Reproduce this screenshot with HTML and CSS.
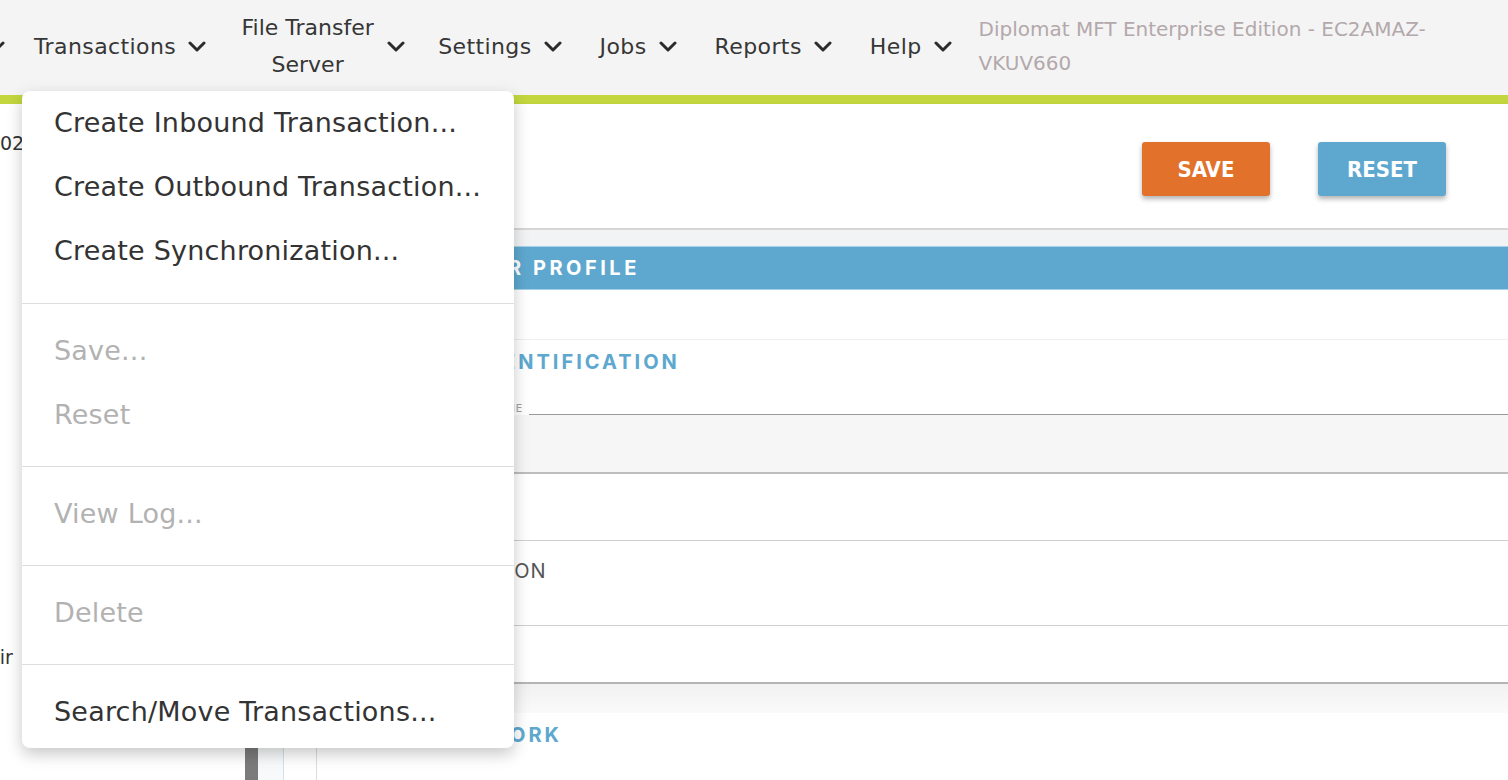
FILE: index.html
```html
<!DOCTYPE html>
<html lang="en">
<head>
<meta charset="UTF-8" />
<meta name="viewport" content="width=device-width,initial-scale=1" />
<title>Diplomat MFT</title>
<link rel="stylesheet" href="styles.css">
</head>
<body>
<header class="topbar">
  <nav class="menubar">
    <div class="nav-item nav-cut">
      <svg class="chev" viewBox="0 0 20 12"><path d="M3 3 L10 10 L17 3" /></svg>
    </div>
    <div class="nav-item">
      <span>Transactions</span>
      <svg class="chev" viewBox="0 0 20 12"><path d="M3 3 L10 10 L17 3" /></svg>
    </div>
    <div class="nav-item nav-wide">
      <span class="two-line">File Transfer Server</span>
      <svg class="chev" viewBox="0 0 20 12"><path d="M3 3 L10 10 L17 3" /></svg>
    </div>
    <div class="nav-item">
      <span>Settings</span>
      <svg class="chev" viewBox="0 0 20 12"><path d="M3 3 L10 10 L17 3" /></svg>
    </div>
    <div class="nav-item">
      <span>Jobs</span>
      <svg class="chev" viewBox="0 0 20 12"><path d="M3 3 L10 10 L17 3" /></svg>
    </div>
    <div class="nav-item">
      <span>Reports</span>
      <svg class="chev" viewBox="0 0 20 12"><path d="M3 3 L10 10 L17 3" /></svg>
    </div>
    <div class="nav-item">
      <span>Help</span>
      <svg class="chev" viewBox="0 0 20 12"><path d="M3 3 L10 10 L17 3" /></svg>
    </div>
    <div class="app-title">Diplomat MFT Enterprise Edition - EC2AMAZ-VKUV660</div>
  </nav>
</header>
<div class="accent"></div>

<div class="workspace">
  <aside class="sidebar">
    <div class="tree">
      <div class="tree-row root">0200 Transactions</div>
      <div class="tree-children">
        <div class="tree-row">Inbound</div>
        <div class="tree-row">Outbound</div>
        <div class="tree-row">Synchronization</div>
      </div>
      <div class="tree-row root shifted">Dir&nbsp;&nbsp;&nbsp;Monitors</div>
    </div>
    <div class="scroll-thumb"></div>
    <div class="tree-gap"></div>
    <div class="pane-edge"></div>
  </aside>

  <main class="editor">
    <div class="toolbar">
      <button class="btn btn-save">SAVE</button>
      <button class="btn btn-reset">RESET</button>
    </div>
    <div class="band"></div>
    <div class="profile-bar">PARTNER PROFILE</div>
    <div class="profile-gap"></div>

    <section class="section">
      <h3 class="section-title">IDENTIFICATION</h3>
      <div class="label-row">
        <span class="field-label">NAME</span>
        <span class="label-line"></span>
      </div>
      <div class="input-box"></div>
      <div class="field-row"></div>
      <div class="field-row tall"><span class="field-caption">DESCRIPTION</span></div>
      <div class="field-row last"></div>
    </section>
    <div class="band light"></div>
    <section class="section">
      <h3 class="section-title shift">NETWORK</h3>
    </section>
  </main>
</div>

<div class="dropdown">
  <div class="menu-group first">
    <div class="menu-item">Create Inbound Transaction...</div>
    <div class="menu-item">Create Outbound Transaction...</div>
    <div class="menu-item">Create Synchronization...</div>
  </div>
  <div class="menu-group">
    <div class="menu-item disabled">Save...</div>
    <div class="menu-item disabled">Reset</div>
  </div>
  <div class="menu-group">
    <div class="menu-item disabled">View Log...</div>
  </div>
  <div class="menu-group">
    <div class="menu-item disabled">Delete</div>
  </div>
  <div class="menu-group last">
    <div class="menu-item">Search/Move Transactions...</div>
  </div>
</div>
</body>
</html>
```

FILE: styles.css
```css
* {
  box-sizing: border-box;
}
body {
  margin: 0;
  font-family: 'DejaVu Sans', 'Inter', sans-serif;
  color: #333;
  background: #fff;
  height: 780px;
  overflow: hidden;
}
.topbar {
  height: 95px;
  background: #f4f4f4;
}
.menubar {
  display: flex;
  align-items: center;
  height: 100%;
  gap: 37px;
  margin-left: -14px;
  padding-bottom: 3px;
  font-size: 22px;
  letter-spacing: 0.4px;
}
.nav-item {
  display: flex;
  align-items: center;
  gap: 11px;
  color: #363636;
}
.nav-cut {
  margin-right: -9px;
}
.nav-wide {
  margin-left: -4px;
  margin-right: -5px;
}
.nav-item .two-line {
  width: 135px;
  text-align: center;
  line-height: 37px;
  letter-spacing: 0;
}
.chev {
  width: 20px;
  height: 12px;
}
.chev path {
  fill: none;
  stroke: #2b2b2b;
  stroke-width: 3;
  stroke-linecap: round;
  stroke-linejoin: round;
}
.app-title {
  width: 480px;
  margin-left: -11px;
  color: #b3a8ab;
  font-size: 20px;
  letter-spacing: 0;
  line-height: 34px;
}
.accent {
  height: 9px;
  background: #c3d63f;
}
.workspace {
  display: flex;
  height: 676px;
}
.sidebar {
  display: flex;
  width: 317px;
  border-right: 1px solid #dcdcdc;
}
.tree {
  width: 245px;
  overflow: hidden;
  padding-top: 27px;
  font-size: 19px;
}
.tree-row {
  line-height: 24px;
  white-space: nowrap;
  color: #333;
}
.tree-row.shifted {
  margin-left: -15px;
}
.tree-children {
  padding-left: 40px;
  height: 490px;
}
.tree-children .tree-row {
  line-height: 40px;
}
.scroll-thumb {
  width: 13px;
  background: #7b7b7b;
}
.tree-gap {
  width: 25px;
  background: #f7f9fa;
}
.pane-edge {
  flex: 1;
  border-left: 1px solid #cfe1ec;
}
.editor {
  flex: 1;
  display: flex;
  flex-direction: column;
}
.toolbar {
  height: 126px;
  display: flex;
  justify-content: flex-end;
  align-items: flex-start;
  gap: 48px;
  padding: 38px 62px 0 0;
  border-bottom: 2px solid #d6d6d6;
  box-shadow: 0 2px 4px rgba(0,0,0,0.12);
}
.btn {
  width: 128px;
  height: 54px;
  border: none;
  border-radius: 3px;
  color: #fff;
  font-family: 'Liberation Sans Narrow', 'DejaVu Sans Condensed', sans-serif;
  font-stretch: condensed;
  font-weight: 700;
  font-size: 22px;
  box-shadow: 0 3px 5px rgba(0,0,0,0.3);
}
.btn-save {
  background: #e2712b;
}
.btn-reset {
  background: #5ea8cf;
}
.band {
  height: 16px;
  background: #f2f3f4;
}
.band.light {
  height: 29px;
  background: linear-gradient(#f1f1f1, #fafafa);
}
.profile-bar {
  height: 44px;
  background: #5ea8cf;
  border-top: 1px solid #a6d1e8;
  border-bottom: 1px solid #a6d1e8;
  color: #fff;
  font-family: 'Inter', sans-serif;
  font-weight: 700;
  font-size: 20px;
  letter-spacing: 3.5px;
  line-height: 42px;
  padding-left: 90px;
}
.profile-gap {
  height: 50px;
  border-bottom: 1px solid #efefef;
}
.section {
  padding-left: 160px;
}
.section-title {
  margin: 0;
  height: 44px;
  line-height: 44px;
  color: #5ea8cf;
  font-family: 'Inter', sans-serif;
  font-size: 20px;
  font-weight: 700;
  letter-spacing: 3px;
}
.section-title.shift {
  margin-left: -40px;
}
.label-row {
  display: flex;
  align-items: flex-end;
  height: 31px;
  padding-left: 10px;
}
.field-label {
  font-family: 'Inter', sans-serif;
  font-size: 11px;
  letter-spacing: 1px;
  color: #a99c9f;
  line-height: 14px;
  margin-right: 6px;
}
.label-line {
  flex: 1;
  border-bottom: 1px solid #9a9a9a;
}
.input-box {
  height: 59px;
  margin-left: -160px;
  background: #f6f6f6;
  border-bottom: 2px solid #bdbdbd;
}
.field-row {
  height: 67px;
  margin-left: -160px;
  border-bottom: 1px solid #cfcfcf;
}
.field-row.tall {
  height: 85px;
  padding: 18px 0 0 85px;
}
.field-row.last {
  height: 58px;
  border-bottom: 2px solid #b5b5b5;
}
.field-caption {
  font-family: 'Inter', sans-serif;
  font-size: 20px;
  letter-spacing: 1px;
  color: #555;
}
.dropdown {
  position: absolute;
  left: 22px;
  top: 91px;
  width: 492px;
  height: 657px;
  background: #fff;
  border-radius: 8px;
  box-shadow: 0 6px 16px rgba(0,0,0,0.22);
  font-size: 27px;
  letter-spacing: 0.2px;
}
.menu-group {
  padding: 15px 0 19px;
  border-bottom: 1px solid #dedede;
}
.menu-group.first {
  padding: 0 0 20px;
}
.menu-group.last {
  border-bottom: none;
}
.menu-item {
  height: 64px;
  line-height: 64px;
  padding-left: 32px;
  color: #333;
  white-space: nowrap;
}
.menu-item.disabled {
  color: #b2b2b2;
}
```
